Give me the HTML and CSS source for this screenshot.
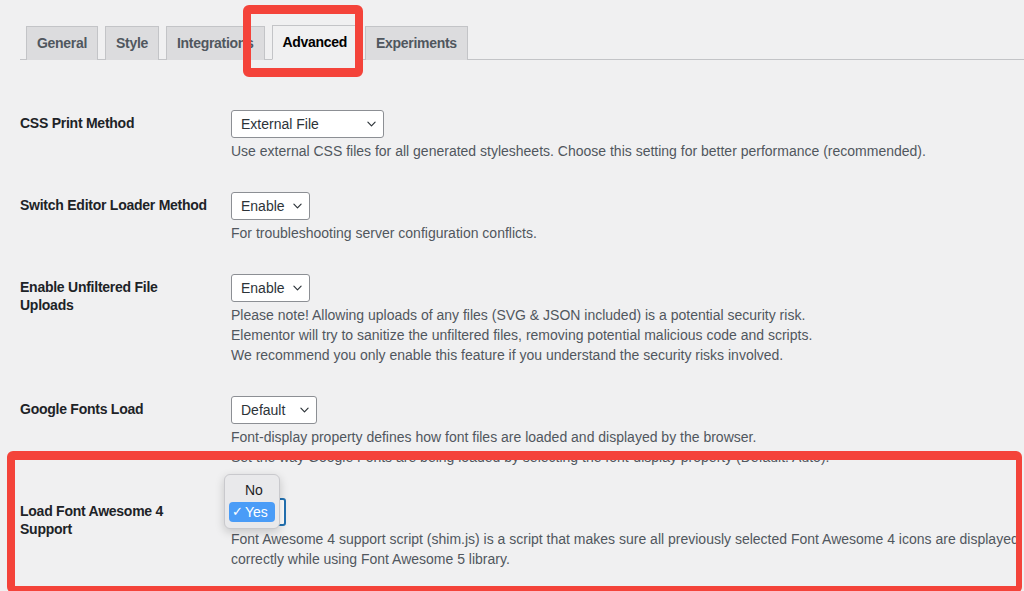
FILE: index.html
```html
<!DOCTYPE html>
<html>
<head>
<meta charset="utf-8">
<link rel="stylesheet" href="styles.css">
</head>
<body>
<div class="page">
  <nav class="tabs">
    <a class="tab">General</a>
    <a class="tab">Style</a>
    <a class="tab">Integrations</a>
    <a class="tab active">Advanced</a>
    <a class="tab">Experiments</a>
  </nav>

  <div class="form">
    <div class="row">
      <div class="label">CSS Print Method</div>
      <div class="field">
        <div class="select w-ext"><span>External File</span><svg class="chev" viewBox="0 0 10 6" width="10" height="6"><path d="M1 1l4 4 4-4" fill="none" stroke="#2c3338" stroke-width="1.3" stroke-linecap="round" stroke-linejoin="round"/></svg></div>
        <p class="desc">Use external CSS files for all generated stylesheets. Choose this setting for better performance (recommended).</p>
      </div>
    </div>

    <div class="row">
      <div class="label">Switch Editor Loader Method</div>
      <div class="field">
        <div class="select w-enable"><span>Enable</span><svg class="chev" viewBox="0 0 10 6" width="10" height="6"><path d="M1 1l4 4 4-4" fill="none" stroke="#2c3338" stroke-width="1.3" stroke-linecap="round" stroke-linejoin="round"/></svg></div>
        <p class="desc">For troubleshooting server configuration conflicts.</p>
      </div>
    </div>

    <div class="row">
      <div class="label">Enable Unfiltered File<br>Uploads</div>
      <div class="field">
        <div class="select w-enable"><span>Enable</span><svg class="chev" viewBox="0 0 10 6" width="10" height="6"><path d="M1 1l4 4 4-4" fill="none" stroke="#2c3338" stroke-width="1.3" stroke-linecap="round" stroke-linejoin="round"/></svg></div>
        <p class="desc">Please note! Allowing uploads of any files (SVG &amp; JSON included) is a potential security risk.<br>Elementor will try to sanitize the unfiltered files, removing potential malicious code and scripts.<br>We recommend you only enable this feature if you understand the security risks involved.</p>
      </div>
    </div>

    <div class="row">
      <div class="label">Google Fonts Load</div>
      <div class="field">
        <div class="select w-default"><span>Default</span><svg class="chev" viewBox="0 0 10 6" width="10" height="6"><path d="M1 1l4 4 4-4" fill="none" stroke="#2c3338" stroke-width="1.3" stroke-linecap="round" stroke-linejoin="round"/></svg></div>
        <p class="desc">Font-display property defines how font files are loaded and displayed by the browser.<br>Set the way Google Fonts are being loaded by selecting the font-display property (Default: Auto).</p>
      </div>
    </div>

    <div class="row">
      <div class="label">Load Font Awesome 4<br>Support</div>
      <div class="field">
        <div class="select-wrap">
          <div class="select w-yes focused"></div>
          <div class="menu">
            <div class="opt">No</div>
            <div class="opt sel"><span class="check">✓</span>Yes</div>
          </div>
        </div>
        <p class="desc">Font Awesome 4 support script (shim.js) is a script that makes sure all previously selected Font Awesome 4 icons are displayed<br>correctly while using Font Awesome 5 library.</p>
      </div>
    </div>
  </div>
</div>

<div class="mark mark-tab"></div>
<div class="mark mark-row"></div>
</body>
</html>
```

FILE: styles.css
```css
html, body {
  margin: 0;
  padding: 0;
  background: #f0f0f1;
  font-family: "Liberation Sans", Arial, sans-serif;
  font-size: 14px;
  color: #3c434a;
  overflow: hidden;
}

body {
  position: relative;
  width: 1024px;
  height: 591px;
}

.page {
  padding: 25px 0 0 20px;
}

.tabs {
  display: flex;
  align-items: flex-end;
  border-bottom: 1px solid #c3c4c7;
  height: 34px;
  padding-left: 6px;
  gap: 7px;
}

.tab {
  display: block;
  box-sizing: border-box;
  height: 34px;
  padding: 0 10px;
  line-height: 32px;
  font-size: 14px;
  font-weight: 700;
  letter-spacing: -0.3px;
  color: #50575e;
  background: #dcdcde;
  border: 1px solid #c3c4c7;
  border-bottom: none;
  margin-bottom: -1px;
}

.tab.active {
  background: #f0f0f1;
  color: #000;
  border-bottom: 1px solid #f0f0f1;
  height: 35px;
}

.form {
  margin-top: 35px;
}

.row {
  display: grid;
  grid-template-columns: 211px 1fr;
}

.label {
  padding: 19px 10px 20px 0;
  font-weight: 700;
  letter-spacing: -0.25px;
  line-height: 18px;
  color: #1d2327;
}

.field {
  padding: 15px 0 16px;
}

.select {
  box-sizing: border-box;
  height: 28px;
  display: flex;
  align-items: center;
  padding: 0 7px 0 9px;
  background: #fff;
  border: 1px solid #8c8f94;
  border-radius: 3px;
  color: #2c3338;
  font-size: 14px;
}

.select .chev {
  margin-left: auto;
  width: 9px;
  height: 6px;
}

.w-ext { width: 153px; }
.w-enable { width: 79px; }
.w-default { width: 86px; }
.w-yes { width: 55px; }

.select.focused {
  border: 2px solid #2271b1;
}

.select-wrap {
  position: relative;
  height: 28px;
}

.menu {
  position: absolute;
  left: -7px;
  top: -24px;
  width: 56px;
  box-sizing: border-box;
  padding: 5px 4px 6px;
  background: #e9e9eb;
  border: 1px solid #c9c9cd;
  border-radius: 6px;
  box-shadow: 0 3px 10px rgba(0,0,0,0.18);
  font-size: 14px;
  color: #1d1d1f;
}

.opt {
  height: 20px;
  line-height: 20px;
  padding-left: 16px;
  border-radius: 4px;
  position: relative;
}

.opt.sel {
  background: #4a9cf7;
  color: #fff;
  margin-top: 2px;
}

.check {
  position: absolute;
  left: 3px;
  top: 0;
  font-size: 13px;
}

.desc {
  margin: 3px 0 0;
  line-height: 20px;
  color: #50575e;
  font-size: 14px;
}

.mark {
  position: absolute;
  border: 8px solid #f4433a;
  box-sizing: border-box;
}

.mark-tab {
  left: 243px;
  top: 5px;
  width: 120px;
  height: 72px;
  border-radius: 6px;
  border-width: 9px 8px 9px 8px;
}

.mark-row {
  left: 7px;
  top: 451px;
  width: 1015px;
  height: 142px;
  border-radius: 6px;
  border-width: 9px 6px 7px 8px;
}
```
